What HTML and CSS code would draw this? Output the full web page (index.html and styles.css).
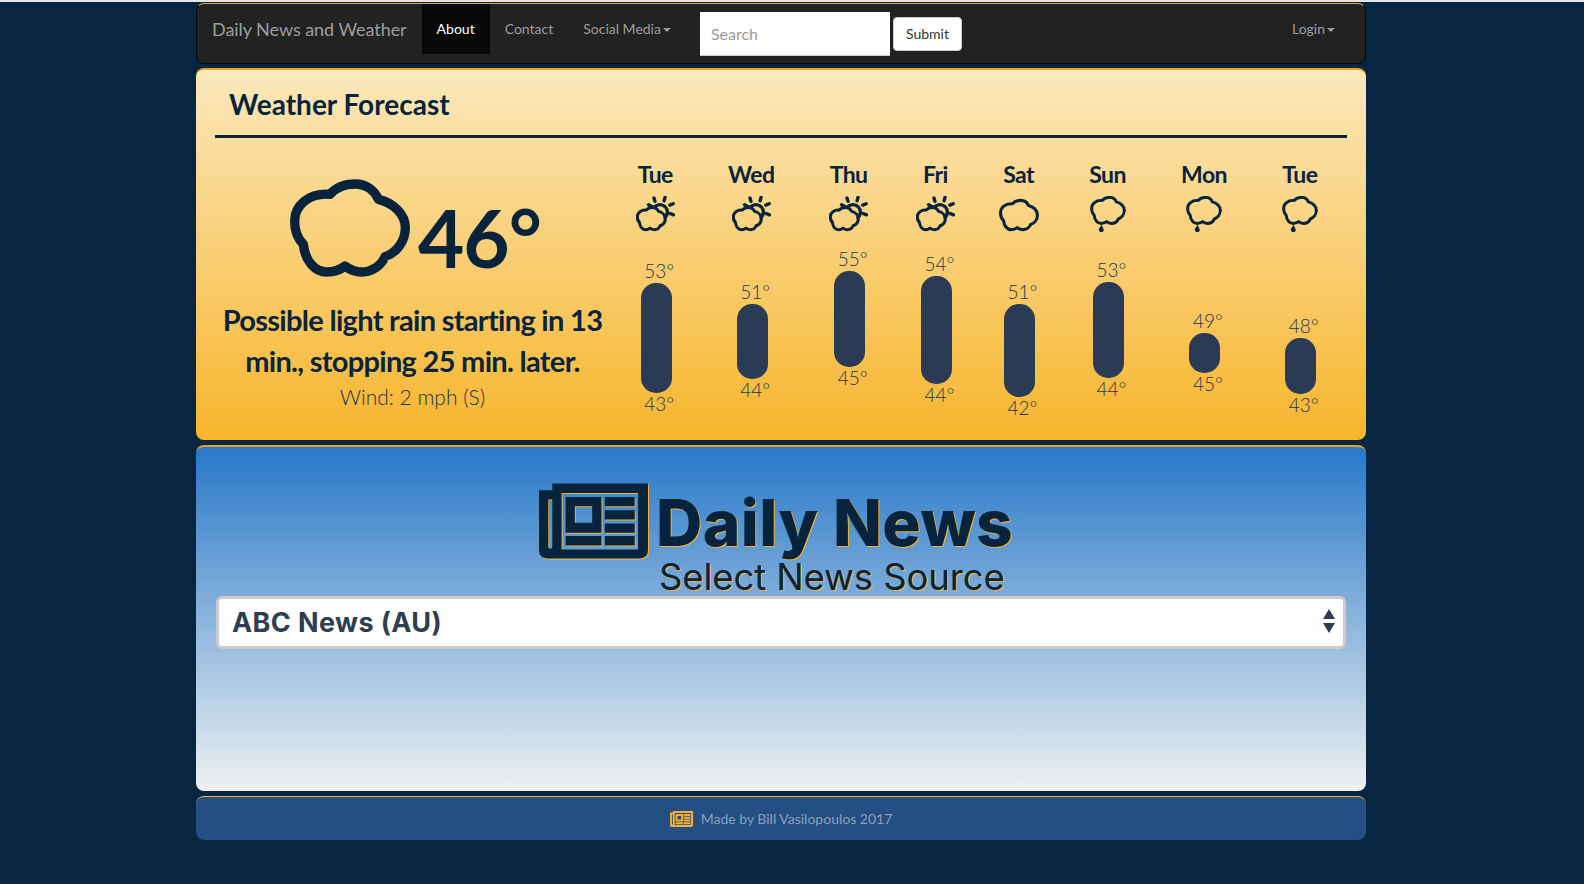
FILE: index.html
```html
<!DOCTYPE html>
<html lang="en">
<head>
<meta charset="utf-8">
<title>Daily News and Weather</title>
<link rel="stylesheet" href="styles.css">
</head>
<body>
<svg class="defs" width="0" height="0" aria-hidden="true">
  <symbol id="cloud" viewBox="0 0 360 292">
    <path class="cloud-line" d="M120 45C140 22 168 14 195 14C230 14 255 35 265 60C310 70 346 105 346 145C346 185 320 220 285 232C275 258 245 278 215 278C195 278 178 270 165 260C150 272 130 278 110 278C75 278 45 245 40 195C25 180 14 155 14 125C14 80 55 40 120 45Z"/>
  </symbol>
  <symbol id="cloud-sun" viewBox="0 0 115 107">
    <use href="#cloud" x="0" y="27" width="90" height="80"/>
    <path class="sun-line" d="M55 32A22 22 0 1 1 86 64M53 6L56 16M86 4L83 14M110 23L100 27M111 56L101 52M37 26L46 31"/>
  </symbol>
  <symbol id="cloud-rain" viewBox="0 0 105 105">
    <use href="#cloud" x="0" y="0" width="105" height="84"/>
    <path class="drop" d="M33 84C37 92 40 95 40 99C40 103 37 105 33 105C29 105 26 103 26 99C26 95 29 92 33 84Z"/>
  </symbol>
  <symbol id="paper" viewBox="0 0 328 225">
    <path fill-rule="evenodd" d="M40 0H328V200Q328 225 303 225H25Q0 225 0 200V20H40ZM28 48V188Q28 196 34 196Q40 196 40 188V48ZM68 28V198H298V28ZM80 40H188V148H80ZM108 68V118H160V68ZM198 40H288V68H198ZM198 80H288V108H198ZM198 120H288V148H198ZM80 158H188V186H80ZM198 158H288V186H198Z"/>
  </symbol>
</svg>

<div class="topline"></div>
<div class="page">
  <nav class="navbar">
    <a class="brand" href="#">Daily News and Weather</a>
    <a class="nav-link active" href="#">About</a>
    <a class="nav-link" href="#">Contact</a>
    <a class="nav-link" href="#">Social Media<span class="caret"></span></a>
    <form class="search">
      <input class="search-input" type="text" placeholder="Search">
      <button class="submit" type="button">Submit</button>
    </form>
    <a class="nav-link login" href="#">Login<span class="caret"></span></a>
  </nav>

  <section class="card weather">
    <h2 class="weather-title">Weather Forecast</h2>
    <div class="rule"></div>
    <div class="weather-body">
      <div class="current">
        <div class="now">
          <svg class="now-icon"><use href="#cloud"/></svg>
          <span class="now-temp">46°</span>
        </div>
        <p class="summary">Possible light rain starting in 13 min., stopping 25 min. later.</p>
        <p class="wind">Wind: 2 mph (S)</p>
      </div>
      <div class="days">
        <div class="day">
          <div class="day-name">Tue</div>
          <svg class="day-icon sun"><use href="#cloud-sun"/></svg>
          <div class="temp" style="margin-top:25px">53°</div>
          <div class="bar" style="height:110px"></div>
          <div class="temp low">43°</div>
        </div>
        <div class="day">
          <div class="day-name">Wed</div>
          <svg class="day-icon sun"><use href="#cloud-sun"/></svg>
          <div class="temp" style="margin-top:46px">51°</div>
          <div class="bar" style="height:75px"></div>
          <div class="temp low">44°</div>
        </div>
        <div class="day">
          <div class="day-name">Thu</div>
          <svg class="day-icon sun"><use href="#cloud-sun"/></svg>
          <div class="temp" style="margin-top:13px">55°</div>
          <div class="bar" style="height:96px"></div>
          <div class="temp low">45°</div>
        </div>
        <div class="day">
          <div class="day-name">Fri</div>
          <svg class="day-icon sun"><use href="#cloud-sun"/></svg>
          <div class="temp" style="margin-top:18px">54°</div>
          <div class="bar" style="height:108px"></div>
          <div class="temp low">44°</div>
        </div>
        <div class="day">
          <div class="day-name">Sat</div>
          <svg class="day-icon plain"><use href="#cloud"/></svg>
          <div class="temp" style="margin-top:46px">51°</div>
          <div class="bar" style="height:93px"></div>
          <div class="temp low">42°</div>
        </div>
        <div class="day">
          <div class="day-name">Sun</div>
          <svg class="day-icon rain"><use href="#cloud-rain"/></svg>
          <div class="temp" style="margin-top:24px">53°</div>
          <div class="bar" style="height:96px"></div>
          <div class="temp low">44°</div>
        </div>
        <div class="day">
          <div class="day-name">Mon</div>
          <svg class="day-icon rain"><use href="#cloud-rain"/></svg>
          <div class="temp" style="margin-top:75px">49°</div>
          <div class="bar" style="height:40px"></div>
          <div class="temp low">45°</div>
        </div>
        <div class="day">
          <div class="day-name">Tue</div>
          <svg class="day-icon rain"><use href="#cloud-rain"/></svg>
          <div class="temp" style="margin-top:80px">48°</div>
          <div class="bar" style="height:56px"></div>
          <div class="temp low">43°</div>
        </div>
      </div>
    </div>
  </section>

  <section class="card news">
    <div class="news-head">
      <svg class="news-icon"><use href="#paper"/></svg>
      <div class="news-titles">
        <h1 class="news-title">Daily News</h1>
        <div class="news-sub">Select News Source</div>
      </div>
    </div>
    <div class="select-wrap">
      <select class="source">
        <option>ABC News (AU)</option>
      </select>
      <span class="arrows"><i class="arrow-up"></i><i class="arrow-down"></i></span>
    </div>
  </section>

  <footer class="footer">
    <svg class="foot-icon"><use href="#paper"/></svg>
    <span>Made by Bill Vasilopoulos 2017</span>
  </footer>
</div>
</body>
</html>
```
FILE: styles.css
```css
* { box-sizing: border-box; }
html, body { margin: 0; padding: 0; }
body {
  background: #082541;
  font-family: Lato, "Liberation Sans", sans-serif;
  color: #08243c;
  font-size: 14px;
  min-height: 884px;
}
.defs { position: absolute; }
symbol { overflow: visible; }
.cloud-line { fill: none; stroke: #08243c; stroke-width: var(--cw, 28); stroke-linejoin: round; }
.sun-line { fill: none; stroke: #08243c; stroke-width: 10; stroke-linecap: round; }
.drop { fill: #08243c; }

.topline { height: 2px; background: #e2e8ee; }
.page { width: 1170px; margin: 1px 0 0 196px; }

/* navbar */
.navbar {
  display: flex;
  align-items: flex-start;
  height: 61px;
  background: #222;
  border: 1px solid #080808;
  border-top: 1px solid #e0a52c;
  border-radius: 8px;
  padding-left: 15px;
  padding-right: 15px;
}
.brand {
  color: #9d9d9d;
  text-decoration: none;
  font-size: 18px;
  line-height: 50px;
  height: 50px;
  margin-right: 15px;
  letter-spacing: -0.05px;
}
.nav-link {
  color: #9d9d9d;
  text-decoration: none;
  font-size: 14px;
  line-height: 50px;
  height: 50px;
  padding: 0 15px;
}
.nav-link.active { background: #080808; color: #fff; }
.caret {
  display: inline-block;
  margin-left: 2px;
  vertical-align: middle;
  border-top: 4px solid #9d9d9d;
  border-left: 4px solid transparent;
  border-right: 4px solid transparent;
}
.search { display: flex; align-items: center; margin: 8px 0 0 14px; height: 44px; }
.search-input {
  width: 190px;
  height: 44px;
  border: 0;
  border-bottom: 1px solid #ccc;
  background: #fff;
  padding: 0 11px;
  font: 16px Lato, sans-serif;
}
.search-input::placeholder { color: #999; opacity: 1; }
.submit {
  width: 69px;
  height: 34px;
  margin-left: 3px;
  border: 1px solid #ccc;
  border-radius: 4px;
  background: #fff;
  color: #333;
  font: 14px Lato, sans-serif;
  padding: 0 0 2px;
}
.login { margin-left: auto; }

/* cards */
.card { border-radius: 8px; margin-top: 4px; }
.weather {
  height: 372px;
  border-top: 2px solid #e6a526;
  background: linear-gradient(#fbe8bc, #f7b52c);
  padding: 0 19px;
}
.weather-title {
  margin: 0;
  padding: 16px 0 0 14px;
  font-size: 28px;
  line-height: 36px;
  font-weight: 700;
  height: 65px;
}
.rule { height: 3px; background: #08243c; }
.weather-body { display: flex; }

.current { width: 395px; padding-top: 40px; text-align: center; }
.now { display: flex; align-items: center; justify-content: center; height: 100px; gap: 8px; padding-left: 6px; }
.now-icon { width: 120px; height: 98px; }
.now-temp { font-size: 80px; line-height: 100px; font-weight: 700; position: relative; top: 9px; letter-spacing: -1px; }
.summary {
  margin: 21px 0 0;
  font-size: 29px;
  line-height: 41px;
  font-weight: 700;
  letter-spacing: -0.7px;
}
.wind { margin: 1px 0 0; font-size: 21px; line-height: 30px; font-weight: 300; color: #1d3550; }

.days { flex: 1; display: flex; justify-content: space-around; padding: 21px 2px 0 0; }
.day { display: flex; flex-direction: column; align-items: center; }
.day-name { font-size: 23px; line-height: 30px; font-weight: 700; letter-spacing: -0.6px; white-space: nowrap; }
.day-icon { display: block; height: 36px; margin: 7px -10px 4px; flex: none; }
.day-icon.sun { width: 39px; --cw: 36; }
.day-icon.plain { width: 40px; --cw: 28; margin-top: 8px; margin-bottom: 3px; }
.day-icon.rain { width: 36px; --cw: 30; }
.temp { font-size: 19px; line-height: 20px; font-weight: 300; padding-left: 8px; margin-left: -10px; margin-right: -10px; color: #1d3550; white-space: nowrap; }
.temp.low { margin-top: 1px; }
.bar { width: 31px; border-radius: 15px; background: #2a3c55; margin: 2px -4px 0 -2px; flex: none; }

/* news */
.news {
  height: 346px;
  margin-top: 5px;
  border-top: 2px solid #e6a526;
  background: linear-gradient(#2778c8, #eef1f2);
  padding: 0 20px;
}
.news-head { display: flex; justify-content: center; align-items: flex-start; padding-top: 36px; height: 149px; }
.news-icon { width: 109px; height: 76px; fill: #08243c; filter: drop-shadow(1px 1px 0 #f3b030); margin-right: 8px; }
.news-titles { display: flex; flex-direction: column; align-items: flex-start; width: 367px; padding-top: 7px; }
.news-title {
  margin: 0 0 3px;
  font-family: Inter, "Liberation Sans", sans-serif;
  font-size: 64px;
  line-height: 66px;
  font-weight: 800;
  letter-spacing: 0.4px;
  text-shadow: 1px 1px 0 #f3b030;
  white-space: nowrap;
}
.news-sub {
  font-family: Inter, "Liberation Sans", sans-serif;
  font-size: 36.3px;
  line-height: 36px;
  margin-left: 3px;
  font-weight: 400;
  text-shadow: 1px 1px 0 #f3b030;
  white-space: nowrap;
}
.select-wrap { position: relative; }
.source {
  display: block;
  width: 100%;
  height: 53px;
  appearance: none;
  background: #fff;
  border: 3px solid #ccc;
  border-radius: 6px;
  padding: 0 13px;
  color: #2c3e50;
  font-family: Inter, "Liberation Sans", sans-serif;
  font-size: 27px;
  font-weight: 700;
  letter-spacing: 0.4px;
}
.arrows {
  position: absolute;
  right: 11px;
  top: 13px;
  display: flex;
  flex-direction: column;
  gap: 4px;
}
.arrow-up, .arrow-down {
  display: block;
  border-left: 6px solid transparent;
  border-right: 6px solid transparent;
}
.arrow-up { border-bottom: 10px solid #2c3e50; }
.arrow-down { border-top: 10px solid #2c3e50; }

/* footer */
.footer {
  display: flex;
  align-items: center;
  justify-content: center;
  gap: 8px;
  height: 44px;
  margin-top: 5px;
  background: #234f85;
  border-top: 1px solid #f3b030;
  border-radius: 8px;
  color: #8d9fb8;
  font-size: 14px;
}
.foot-icon { width: 23px; height: 16px; fill: #f3b030; }
```
